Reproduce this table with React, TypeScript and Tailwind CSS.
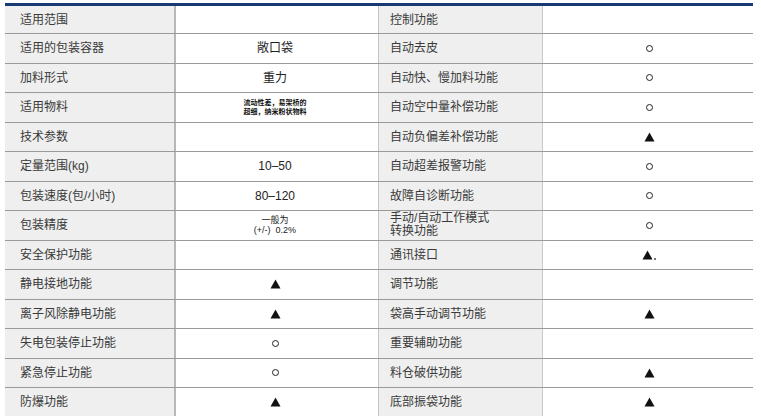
import React from 'react';

type Mark = '' | 'tri' | 'dot' | 'tri2';

interface Cell {
  label: React.ReactNode;
  value: React.ReactNode;
}

const Triangle = ({ extra }: { extra?: boolean }) => (
  <span className="inline-flex items-end">
    <svg width="11" height="10" viewBox="0 0 11 10">
      <polygon points="5.5,0.5 10.5,9.5 0.5,9.5" fill="#111" />
    </svg>
    {extra && <span className="ml-[1px] w-[2px] h-[2px] bg-[#444] rounded-full" />}
  </span>
);

const Dot = () => <span className="inline-block w-[7px] h-[7px] rounded-full border-[1.5px] border-[#222]" />;

const mark = (m: Mark) => {
  if (m === 'tri') return <Triangle />;
  if (m === 'tri2') return <Triangle extra />;
  if (m === 'dot') return <Dot />;
  return null;
};

const left: Cell[] = [
  { label: '适用范围', value: '' },
  { label: '适用的包装容器', value: '敞口袋' },
  { label: '加料形式', value: '重力' },
  {
    label: '适用物料',
    value: (
      <div className="text-[7px] leading-[9px] font-bold text-[#111] text-left">
        流动性差，易架桥的
        <br />
        超细，纳米粉状物料
      </div>
    ),
  },
  { label: '技术参数', value: '' },
  { label: '定量范围(kg)', value: '10–50' },
  { label: '包装速度(包/小时)', value: '80–120' },
  {
    label: '包装精度',
    value: (
      <div className="text-[9px] leading-[10px] text-[#222] text-center">
        一般为
        <br />
        (+/-)&nbsp; 0.2%
      </div>
    ),
  },
  { label: '安全保护功能', value: '' },
  { label: '静电接地功能', value: mark('tri') },
  { label: '离子风除静电功能', value: mark('tri') },
  { label: '失电包装停止功能', value: mark('dot') },
  { label: '紧急停止功能', value: mark('dot') },
  { label: '防爆功能', value: mark('tri') },
];

const right: Cell[] = [
  { label: '控制功能', value: '' },
  { label: '自动去皮', value: mark('dot') },
  { label: '自动快、慢加料功能', value: mark('dot') },
  { label: '自动空中量补偿功能', value: mark('dot') },
  { label: '自动负偏差补偿功能', value: mark('tri') },
  { label: '自动超差报警功能', value: mark('dot') },
  { label: '故障自诊断功能', value: mark('dot') },
  {
    label: (
      <div className="leading-[13px]">
        手动/自动工作模式
        <br />
        转换功能
      </div>
    ),
    value: mark('dot'),
  },
  { label: '通讯接口', value: mark('tri2') },
  { label: '调节功能', value: '' },
  { label: '袋高手动调节功能', value: mark('tri') },
  { label: '重要辅助功能', value: '' },
  { label: '料仓破供功能', value: mark('tri') },
  { label: '底部振袋功能', value: mark('tri') },
];

const App = () => {
  return (
    <div
      className="w-[761px] h-[420px] bg-white pl-[5px] pt-[3px] text-[12px] text-[#3a3a3a]"
      style={{ fontFamily: '"Liberation Sans", "Noto Sans CJK SC", sans-serif' }}
    >
      <div className="w-[748px]">
        <div className="h-[3px] bg-[#173a72]" />
        {left.map((row, i) => {
          const r = right[i];
          const first = i === 0;
          const last = i === left.length - 1;
          return (
            <div
              key={i}
              className={`grid grid-cols-[171px_202px_164px_211px] ${
                first ? 'h-[28px]' : last ? 'h-[28px]' : 'h-[29.5px]'
              } ${last ? '' : 'border-b border-[#9a9a9a]'}`}
            >
              <div className="bg-[#eeefee] border-r-2 border-[#b8b8b8] flex items-center pl-[15px]">
                {row.label}
              </div>
              <div className="flex items-center justify-center pr-[4px] text-[#222]">{row.value}</div>
              <div className="bg-[#eeefee] border-l border-[#c4c4c4] flex items-center pl-[11px]">
                {r.label}
              </div>
              <div className="flex items-center justify-center pl-[2px] border-l border-[#c8c8c8]">{r.value}</div>
            </div>
          );
        })}
      </div>
    </div>
  );
};

export default App;
